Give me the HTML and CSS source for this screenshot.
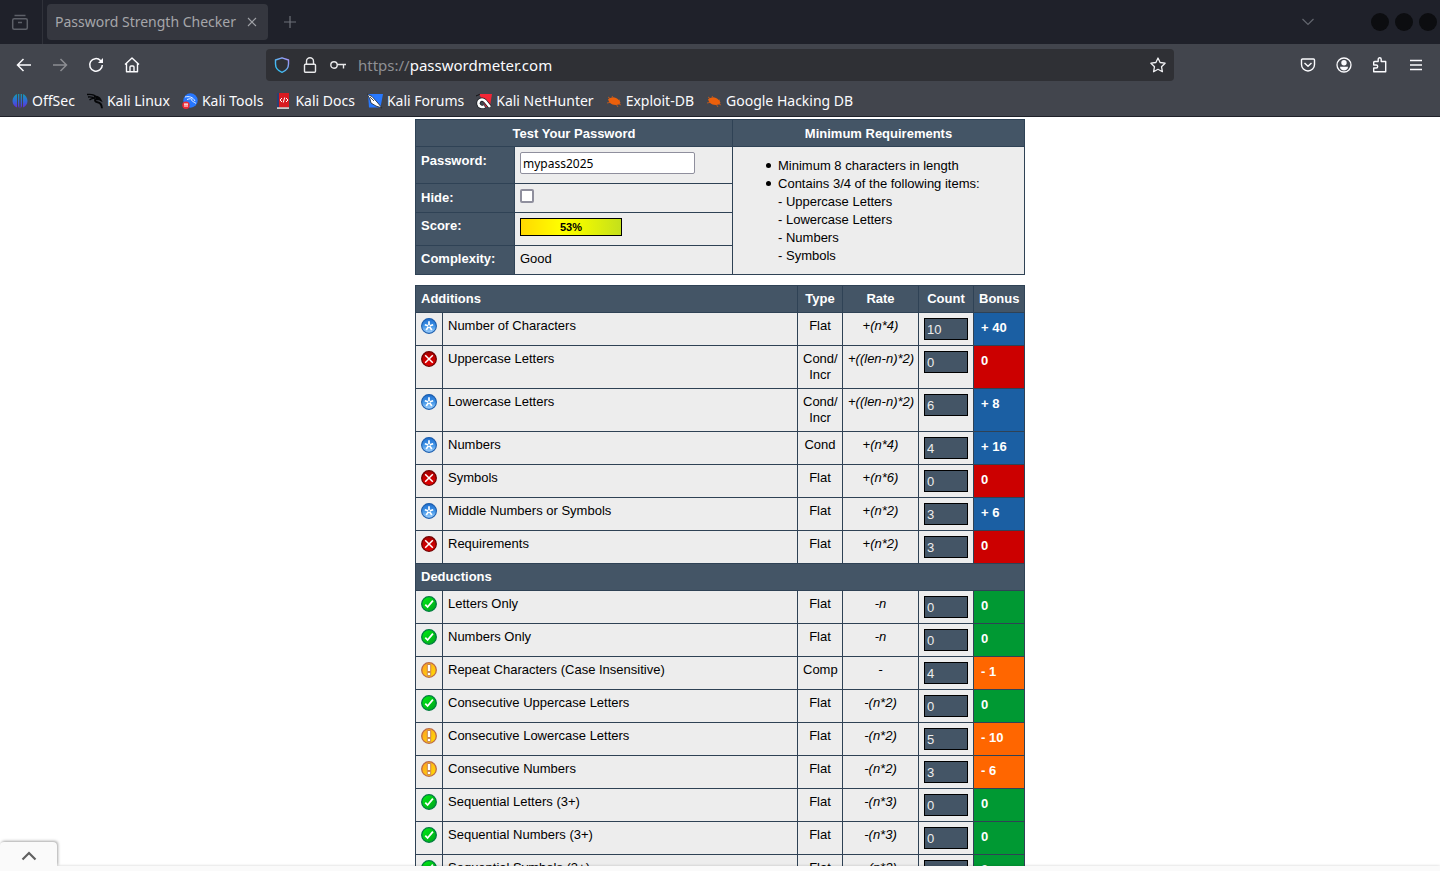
FILE: index.html
```html
<!DOCTYPE html>
<html lang="en">
<head>
<meta charset="utf-8">
<title>Password Strength Checker</title>
<meta name="viewport" content="width=device-width, initial-scale=1">
<link rel="stylesheet" href="styles.css">
</head>
<body>
<svg class="defs" aria-hidden="true">
  <defs>
    <linearGradient id="g-blue" x1="0" y1="0" x2="0" y2="1"><stop offset="0" stop-color="#1f6fd0"/><stop offset=".5" stop-color="#3f93e6"/><stop offset="1" stop-color="#a8d6ff"/></linearGradient>
    <linearGradient id="g-red" x1="0" y1="0" x2="0" y2="1"><stop offset="0" stop-color="#a80000"/><stop offset="1" stop-color="#e60000"/></linearGradient>
    <linearGradient id="g-green" x1="0" y1="0" x2="1" y2="1"><stop offset="0" stop-color="#00f010"/><stop offset="1" stop-color="#00a020"/></linearGradient>
    <linearGradient id="g-gold" x1="0" y1="0" x2="1" y2="1"><stop offset="0" stop-color="#ffa022"/><stop offset="1" stop-color="#ffe000"/></linearGradient>
    <linearGradient id="g-shield" x1="0" y1="1" x2="1" y2="0"><stop offset="0" stop-color="#20c8f8"/><stop offset=".5" stop-color="#60b0f0"/><stop offset="1" stop-color="#b090f8"/></linearGradient>
    <linearGradient id="g-off" gradientUnits="userSpaceOnUse" x1="0" y1="0" x2="0" y2="16"><stop offset="0" stop-color="#12a0a8"/><stop offset=".5" stop-color="#3068d8"/><stop offset="1" stop-color="#7020d8"/></linearGradient>
  </defs>
  <symbol id="i-star" viewBox="0 0 16 16"><circle cx="8" cy="8" r="7.4" fill="url(#g-blue)" stroke="#1c5eae" stroke-width="1.1"/><path d="M8 3.300V7.500M3.800 6.700 8 8l4.200-1.300M5.200 12 8 8l2.800 4" fill="none" stroke="#fff" stroke-width="1.700"/><circle cx="8" cy="8" r=".9" fill="#3f8fe0"/></symbol>
  <symbol id="i-cross" viewBox="0 0 16 16"><circle cx="8" cy="8" r="7.3" fill="url(#g-red)" stroke="#700000" stroke-width="1.3"/><path d="m4.200 4.200 7.600 7.600m0-7.600-7.600 7.600" stroke="#fff" stroke-width="1.5"/></symbol>
  <symbol id="i-check" viewBox="0 0 16 16"><circle cx="8" cy="8" r="7.3" fill="url(#g-green)" stroke="#007c40" stroke-width="1.3"/><path d="m4.3 8.6 2.3 2.4 5.3-6.4" fill="none" stroke="#fff" stroke-width="1.8"/></symbol>
  <symbol id="i-warn" viewBox="0 0 16 16"><circle cx="8" cy="8" r="7.3" fill="url(#g-gold)" stroke="#bd6b47" stroke-width="1.3"/><path d="M6.300 2.500h3.400v7H6.300zM6.300 10.400h3.400v3.200H6.300z" fill="#fff" stroke="#c47b4a" stroke-width=".9"/></symbol>
  <symbol id="i-bug" viewBox="0 0 16 16"><path d="M2 6.500c2-2 5-2.500 8-1.500 2.500 1 4 3 4.500 5-1.500 2-5 2.500-8 1.500-2-.8-3.500-2.500-4.500-5z" fill="#ec600b"/><path d="m2 4 4 3M1 10l5-1M6 3l2 3m6 1-3 1m4 4-4-2m1 4-2-3" stroke="#ec600b" stroke-width=".7"/></symbol>
</svg>

<header class="chrome">
  <div class="tabstrip">
    <button class="tab-view" type="button" aria-label="View recent browsing"><svg viewBox="0 0 20 20" width="20" height="20" fill="none" stroke="#5d6068" stroke-width="1.5"><path d="M4.500 3.500h11"/><rect x="2.700" y="6.700" width="14.600" height="10.600" rx="1.500"/><path d="M8 10.500h4"/></svg></button>
    <div class="tab"><span>Password Strength Checker</span><button type="button" aria-label="Close tab"><svg viewBox="0 0 10 10" width="10" height="10" stroke="#9fa1a6" stroke-width="1.100"><path d="m1 1 8 8m0-8-8 8"/></svg></button></div>
    <button class="new-tab" type="button" aria-label="New tab"><svg viewBox="0 0 12 12" width="12" height="12" stroke="#6d7078" stroke-width="1.200"><path d="M6 0v12M0 6h12"/></svg></button>
    <button class="all-tabs" type="button" aria-label="List all tabs"><svg viewBox="0 0 12 8" width="12" height="8" fill="none" stroke="#63666e" stroke-width="1.200"><path d="m.5 1 5.500 5.500L11.500 1"/></svg></button>
    <div class="window-buttons"><button type="button" aria-label="Minimize"></button><button type="button" aria-label="Maximize"></button><button type="button" aria-label="Close window"></button></div>
  </div>

  <div class="toolbar">
    <div class="nav-left">
      <button type="button" aria-label="Back"><svg viewBox="0 0 16 16" width="16" height="16" fill="none" stroke="#fbfbfe" stroke-width="1.500"><path d="M15 8H1.500M7.500 2l-6 6 6 6"/></svg></button>
      <button type="button" aria-label="Forward" disabled><svg viewBox="0 0 16 16" width="16" height="16" fill="none" stroke="#8c8d92" stroke-width="1.500"><path d="M1 8h13.500M8.500 2l6 6-6 6"/></svg></button>
      <button type="button" aria-label="Reload"><svg viewBox="0 0 16 16" width="16" height="16" fill="none" stroke="#fbfbfe" stroke-width="1.500"><path d="M14.300 8A6.300 6.300 0 1 1 12.500 3.500l1.500 1.500"/><path d="M15 1v5h-5z" fill="#fbfbfe" stroke="none"/></svg></button>
      <button type="button" aria-label="Home"><svg viewBox="0 0 16 16" width="16" height="16" fill="none" stroke="#fbfbfe" stroke-width="1.400" stroke-linejoin="round"><path d="M1 7.500 8 1l7 6.500M2.500 6.500v8.300h11V6.500M6 14.500V10a1 1 0 0 1 1-1h2a1 1 0 0 1 1 1v4.500"/></svg></button>
    </div>
    <div class="urlbar">
      <svg viewBox="0 0 16 16" width="16" height="16" fill="none" stroke="url(#g-shield)" stroke-width="1.400" stroke-linejoin="round"><path d="M8 .8 14.500 3v4c0 4-3 7-6.500 8.300C4.500 14 1.500 11 1.500 7V3z"/></svg>
      <svg viewBox="0 0 16 16" width="16" height="16" fill="none" stroke="#e8e8ea" stroke-width="1.400"><rect x="2.500" y="7.300" width="11" height="8" rx="1"/><path d="M4.500 7V4.200a3.500 3.500 0 0 1 7 0V7"/></svg>
      <svg viewBox="0 0 16 16" width="16" height="16" fill="none" stroke="#e8e8ea" stroke-width="1.400"><circle cx="4" cy="8" r="3.200"/><path d="M7 7.500h9M13.500 8v3.500"/></svg>
      <a class="url" href="https://passwordmeter.com"><span>https://</span>passwordmeter.com</a>
      <button type="button" aria-label="Bookmark this page"><svg viewBox="0 0 16 16" width="16" height="16" fill="none" stroke="#f0f0f3" stroke-width="1.300" stroke-linejoin="round"><path d="m8 1 2.100 4.500 5 .7-3.600 3.500.9 5L8 12.300l-4.400 2.400.9-5L.9 6.200l5-.7z"/></svg></button>
    </div>
    <div class="nav-right">
      <button type="button" aria-label="Pocket"><svg viewBox="0 0 16 16" width="16" height="16" fill="none" stroke="#fbfbfe" stroke-width="1.400" stroke-linejoin="round"><path d="M2.500 2h11a1 1 0 0 1 1 1v4.500a6.500 6.500 0 0 1-13 0V3a1 1 0 0 1 1-1zM4.500 6 8 9.300 11.500 6"/></svg></button>
      <button type="button" aria-label="Account"><svg viewBox="0 0 16 16" width="16" height="16" fill="#fbfbfe"><circle cx="8" cy="8" r="7" fill="none" stroke="#fbfbfe" stroke-width="1.300"/><circle cx="8" cy="5.800" r="2.700"/><path d="M4 9.800h8c0 5-8 5-8 0z"/></svg></button>
      <button type="button" aria-label="Extensions"><svg viewBox="0 0 16 16" width="16" height="16" fill="none" stroke="#fbfbfe" stroke-width="1.400" stroke-linejoin="round"><path d="M1.700 8V5.500a1 1 0 0 1 1-1h3.500V2.300a1.500 1.500 0 0 1 3 0v2.200h4.500v10.300h-12V11h2.500a1.500 1.500 0 0 0 0-3z"/></svg></button>
      <button type="button" aria-label="Application menu"><svg viewBox="0 0 16 16" width="16" height="16" stroke="#fbfbfe" stroke-width="1.400"><path d="M2 3.500h12M2 8h12M2 12.500h12"/></svg></button>
    </div>
  </div>

  <nav class="bookmarks" aria-label="Bookmarks">
    <a href="#"><svg viewBox="0 0 16 16" width="16" height="16" fill="url(#g-off)"><path d="M5 1v13.500C2.500 13.500.5 11 .5 8s2-6 4.500-7zM6 1h1.300v14.500L6 13zM8.700 1H10v12l-1.300 2.500zM11 1c2.500 1 4.500 4 4.500 7s-2 5.500-4.500 6.500z"/></svg>OffSec</a>
    <a href="#"><svg viewBox="0 0 16 16" width="16" height="16" fill="none" stroke="#050608"><path d="M0 1.500c4-.5 8 .5 10 3M1 4c3-.5 5 0 7 1.500M2.500 7C4 5.500 6 5 8 5.500" stroke-width="1.300"/><path d="M7 4c2-.5 5 0 6.500 3L12 6.200 9.500 6C7 7 8 9 10.500 9.300c3 .4 4.200 2 4.500 6" stroke-width="1.900"/></svg>Kali Linux</a>
    <a href="#"><svg viewBox="0 0 16 16" width="16" height="16"><circle cx="8.500" cy="7.500" r="7.200" fill="#2777ff"/><path d="M3 4c4-1 8 0 10 4M5 6.500c3-1 4-1 5 0-1 2 2 2 4 4" stroke="#fff" stroke-width=".9" fill="none"/><circle cx="4" cy="12.200" r="3.700" fill="#ed2835"/><path d="M2 11h4M3 11v3m2-3v3" stroke="#fff"/></svg>Kali Tools</a>
    <a href="#"><svg viewBox="0 0 16 16" width="16" height="16"><path d="M2 0h12v16H2z" fill="#d91a20"/><path d="M2 0h2v15H2z" fill="#273f75"/><path d="M2 14.200h12V16H2z" fill="#c9c9c9"/><path d="M7 5 5 7l2 2m4-4 2 2-2 2M9.700 4.500 8.300 9.500" stroke="#fff" fill="none"/></svg>Kali Docs</a>
    <a href="#"><svg viewBox="0 0 16 16" width="16" height="16"><path d="M1 1h15l-2.500 13.500H2z" fill="#2879ff"/><path d="m0 1 5 2.500 5 5.500 5 6-6-2-5-3-1-4z" fill="#fff" stroke="#20252c" stroke-width=".8"/><path d="m3 4 4 4" stroke="#20252c" stroke-width=".8"/></svg>Kali Forums</a>
    <a href="#"><svg viewBox="0 0 16 16" width="16" height="16"><path d="m3 1 13 0-2 12-4 1z" fill="#f32636"/><path d="M0 3c2-1 3-1 4-2" stroke="#111" /><path d="M14 14 9 8C6 5 2 7 2.500 11c.5 3 4 3.500 6 2.500" fill="none" stroke="#181b20" stroke-width="4"/><path d="M14 14 9 8C6 5 2 7 2.500 11c.5 3 4 3.500 6 2.500" fill="none" stroke="#fff" stroke-width="2.600"/></svg>Kali NetHunter</a>
    <a href="#"><svg width="16" height="16"><use href="#i-bug"/></svg>Exploit-DB</a>
    <a href="#"><svg width="16" height="16"><use href="#i-bug"/></svg>Google Hacking DB</a>
  </nav>
</header>

<main class="page">
  <div class="meter">
    <table class="test">
      <colgroup><col class="w-label"><col class="w-field"><col></colgroup>
      <thead><tr><th colspan="2" scope="colgroup">Test Your Password</th><th scope="col">Minimum Requirements</th></tr></thead>
      <tbody>
        <tr class="row-password"><th scope="row"><label for="pwd">Password:</label></th><td><input class="pwd" id="pwd" type="text" value="mypass2025"></td>
          <td class="requirements" rowspan="4"><ul><li>Minimum 8 characters in length</li><li>Contains 3/4 of the following items:<br>- Uppercase Letters<br>- Lowercase Letters<br>- Numbers<br>- Symbols</li></ul></td></tr>
        <tr class="row-hide"><th scope="row"><label for="hide">Hide:</label></th><td><input class="hide" id="hide" type="checkbox"></td></tr>
        <tr class="row-score"><th scope="row">Score:</th><td><div class="score">53%</div></td></tr>
        <tr class="row-complexity"><th scope="row">Complexity:</th><td>Good</td></tr>
      </tbody>
    </table>

    <table class="rules">
      <colgroup><col class="w-icon"><col><col class="w-type"><col class="w-rate"><col class="w-count"><col class="w-bonus"></colgroup>
      <thead><tr><th class="left" colspan="2" scope="colgroup">Additions</th><th scope="col">Type</th><th scope="col">Rate</th><th scope="col">Count</th><th scope="col">Bonus</th></tr></thead>
      <tbody>
        <tr><td><svg class="mark"><use href="#i-star"/></svg></td><td>Number of Characters</td><td>Flat</td><td>+(n*4)</td><td><input type="text" aria-label="Number of Characters count" value="10" readonly></td><td class="exceed"><div>+ 40</div></td></tr>
        <tr><td><svg class="mark"><use href="#i-cross"/></svg></td><td>Uppercase Letters</td><td>Cond/<br>Incr</td><td>+((len-n)*2)</td><td><input type="text" aria-label="Uppercase Letters count" value="0" readonly></td><td class="fail"><div>0</div></td></tr>
        <tr><td><svg class="mark"><use href="#i-star"/></svg></td><td>Lowercase Letters</td><td>Cond/<br>Incr</td><td>+((len-n)*2)</td><td><input type="text" aria-label="Lowercase Letters count" value="6" readonly></td><td class="exceed"><div>+ 8</div></td></tr>
        <tr><td><svg class="mark"><use href="#i-star"/></svg></td><td>Numbers</td><td>Cond</td><td>+(n*4)</td><td><input type="text" aria-label="Numbers count" value="4" readonly></td><td class="exceed"><div>+ 16</div></td></tr>
        <tr><td><svg class="mark"><use href="#i-cross"/></svg></td><td>Symbols</td><td>Flat</td><td>+(n*6)</td><td><input type="text" aria-label="Symbols count" value="0" readonly></td><td class="fail"><div>0</div></td></tr>
        <tr><td><svg class="mark"><use href="#i-star"/></svg></td><td>Middle Numbers or Symbols</td><td>Flat</td><td>+(n*2)</td><td><input type="text" aria-label="Middle Numbers or Symbols count" value="3" readonly></td><td class="exceed"><div>+ 6</div></td></tr>
        <tr><td><svg class="mark"><use href="#i-cross"/></svg></td><td>Requirements</td><td>Flat</td><td>+(n*2)</td><td><input type="text" aria-label="Requirements count" value="3" readonly></td><td class="fail"><div>0</div></td></tr>
      </tbody>
      <tbody>
        <tr><th class="left" colspan="6" scope="rowgroup">Deductions</th></tr>
        <tr><td><svg class="mark"><use href="#i-check"/></svg></td><td>Letters Only</td><td>Flat</td><td>-n</td><td><input type="text" aria-label="Letters Only count" value="0" readonly></td><td class="pass"><div>0</div></td></tr>
        <tr><td><svg class="mark"><use href="#i-check"/></svg></td><td>Numbers Only</td><td>Flat</td><td>-n</td><td><input type="text" aria-label="Numbers Only count" value="0" readonly></td><td class="pass"><div>0</div></td></tr>
        <tr><td><svg class="mark"><use href="#i-warn"/></svg></td><td>Repeat Characters (Case Insensitive)</td><td>Comp</td><td>-</td><td><input type="text" aria-label="Repeat Characters count" value="4" readonly></td><td class="warn"><div>- 1</div></td></tr>
        <tr><td><svg class="mark"><use href="#i-check"/></svg></td><td>Consecutive Uppercase Letters</td><td>Flat</td><td>-(n*2)</td><td><input type="text" aria-label="Consecutive Uppercase Letters count" value="0" readonly></td><td class="pass"><div>0</div></td></tr>
        <tr><td><svg class="mark"><use href="#i-warn"/></svg></td><td>Consecutive Lowercase Letters</td><td>Flat</td><td>-(n*2)</td><td><input type="text" aria-label="Consecutive Lowercase Letters count" value="5" readonly></td><td class="warn"><div>- 10</div></td></tr>
        <tr><td><svg class="mark"><use href="#i-warn"/></svg></td><td>Consecutive Numbers</td><td>Flat</td><td>-(n*2)</td><td><input type="text" aria-label="Consecutive Numbers count" value="3" readonly></td><td class="warn"><div>- 6</div></td></tr>
        <tr><td><svg class="mark"><use href="#i-check"/></svg></td><td>Sequential Letters (3+)</td><td>Flat</td><td>-(n*3)</td><td><input type="text" aria-label="Sequential Letters count" value="0" readonly></td><td class="pass"><div>0</div></td></tr>
        <tr><td><svg class="mark"><use href="#i-check"/></svg></td><td>Sequential Numbers (3+)</td><td>Flat</td><td>-(n*3)</td><td><input type="text" aria-label="Sequential Numbers count" value="0" readonly></td><td class="pass"><div>0</div></td></tr>
        <tr><td><svg class="mark"><use href="#i-check"/></svg></td><td>Sequential Symbols (3+)</td><td>Flat</td><td>-(n*3)</td><td><input type="text" aria-label="Sequential Symbols count" value="0" readonly></td><td class="pass"><div>0</div></td></tr>
      </tbody>
    </table>
  </div>
</main>

<footer class="drawer">
  <button class="drawer-tab" type="button" aria-label="Expand panel"><svg viewBox="0 0 16 10" width="16" height="10" fill="none" stroke="#616161" stroke-width="2.200"><path d="m1.500 8.500 6.500-6.500 6.500 6.500"/></svg></button>
</footer>
</body>
</html>
```

FILE: styles.css
```css
* { box-sizing: border-box; }

body {
  margin: 0;
  height: 100vh;
  display: flex;
  flex-direction: column;
  overflow: hidden;
  background: #fff;
  color: #000;
  font: 13px/16px "Liberation Sans", Arial, sans-serif;
}

.defs { position: absolute; width: 0; height: 0; }

button {
  display: flex;
  align-items: center;
  justify-content: center;
  padding: 0;
  border: 0;
  background: none;
  color: inherit;
  font: inherit;
}

svg { display: block; flex: none; }

/* Browser chrome */
.chrome {
  flex: none;
  background: #42454d;
  border-bottom: 1px solid #1f2129;
  color: #fbfbfe;
  font: 14px/20px "Noto Sans", sans-serif;
}

.tabstrip {
  display: flex;
  align-items: center;
  height: 44px;
  background: #1f212a;
}

.tab-view {
  width: 43px;
  height: 44px;
  padding-right: 3px;
  border-right: 1px solid #30323a;
}

.tab {
  display: flex;
  align-items: center;
  justify-content: space-between;
  width: 221px;
  height: 36px;
  margin-left: 4px;
  padding: 0 11px 0 8px;
  border-radius: 4px;
  background: #35373f;
  color: #a5a6aa;
  white-space: nowrap;
}

.new-tab { width: 44px; height: 44px; }

.all-tabs { width: 44px; height: 44px; margin-left: auto; }

.window-buttons { display: flex; gap: 6px; margin: 0 3px 0 41px; }

.window-buttons button {
  width: 18px;
  height: 18px;
  border-radius: 50%;
  background: #0c0d10;
}

.toolbar { display: flex; align-items: center; height: 42px; }

.nav-left, .nav-right { display: flex; gap: 4px; }

.nav-left { width: 266px; padding-left: 8px; }

.nav-right { width: 266px; padding-right: 8px; justify-content: flex-end; }

.nav-left button, .nav-right button { width: 32px; height: 32px; }

.urlbar {
  display: flex;
  align-items: center;
  gap: 12px;
  flex: 1;
  height: 32px;
  padding: 0 8px;
  border-radius: 4px;
  background: #2f3035;
}

.url {
  flex: 1;
  color: #fbfbfe;
  font-size: 15px;
  text-decoration: none;
}

.url span { color: #8e8f93; }

.bookmarks {
  display: flex;
  align-items: center;
  gap: 12px;
  height: 30px;
  padding: 0 12px;
}

.bookmarks a {
  display: flex;
  align-items: center;
  gap: 4px;
  color: inherit;
  text-decoration: none;
  white-space: nowrap;
}

/* Page */
.page { flex: 1; min-height: 0; overflow: hidden; }

.meter {
  display: flex;
  flex-direction: column;
  gap: 10px;
  max-width: 610px;
  margin: 0 auto;
  padding-top: 2px;
}

table {
  width: 100%;
  border-collapse: collapse;
  table-layout: fixed;
  background: #ededed;
}

th, td {
  padding: 5px;
  border: 1px solid #2f4255;
  text-align: left;
  vertical-align: top;
}

th { background: #445566; color: #fff; }

thead th { text-align: center; }

thead .left { text-align: left; }

.test thead th, .row-password th, .row-hide th { padding: 6px 5px 4px; }

.w-label { width: 99px; }
.w-field { width: 218px; }

.row-password { height: 37px; }
.row-hide { height: 29px; }
.row-score { height: 33px; }
.row-complexity { height: 29px; }

.pwd {
  display: block;
  width: 175px;
  height: 22px;
  padding: 0 2px;
  border: 1px solid #8f8f9d;
  border-radius: 2px;
  background: #fff;
  color: #000;
  font: 12px/20px "Noto Sans", sans-serif;
}

.hide {
  appearance: none;
  display: block;
  width: 14px;
  height: 14px;
  margin: 0;
  border: 2px solid #8f8f9d;
  border-radius: 2px;
  background: #fff;
}

.score {
  width: 102px;
  height: 18px;
  border: 1px solid #000;
  background: linear-gradient(90deg, #ffd800, #ffff00 40%, #f0f800 60%, #c4e01c);
  font-size: 11px;
  font-weight: bold;
  text-align: center;
}

.requirements { line-height: 18px; }

.requirements ul { margin: 5px 0 0; padding-left: 40px; list-style: none; }

.requirements li::before {
  content: "";
  display: inline-block;
  width: 5px;
  height: 5px;
  margin: 0 7px 2px -12px;
  border-radius: 50%;
  background: #000;
}

.w-icon { width: 27px; }
.w-type { width: 45px; }
.w-rate { width: 76px; }
.w-count { width: 55px; }
.w-bonus { width: 51px; }

.mark { width: 16px; height: 16px; }

.rules td:nth-child(3), .rules td:nth-child(4) { text-align: center; }

.rules td:nth-child(4) { font-style: italic; white-space: nowrap; }

.rules input {
  display: block;
  width: 44px;
  height: 22px;
  padding: 0 2px;
  border: 1px solid #000;
  background: #445566;
  color: #ededed;
  font: inherit;
}

.rules td:last-child { color: #fff; font-weight: bold; }

.rules td div { padding: 2px; }

.rules .exceed { background: #1b5fa3; }
.rules .fail { background: #cc0000; }
.rules .pass { background: #009933; }
.rules .warn { background: #ff6600; }

/* Collapsed bottom drawer */
.drawer {
  position: relative;
  flex: none;
  height: 5px;
  background: #fafafa;
  box-shadow: 0 0 3px rgba(0, 0, 0, .2);
}

.drawer-tab {
  position: absolute;
  left: 0;
  bottom: 5px;
  width: 57px;
  height: 24px;
  padding-top: 4px;
  border-radius: 4px 4px 0 0;
  background: #fafafa;
  box-shadow: 1px -1px 3px rgba(0, 0, 0, .35);
  clip-path: inset(-4px -4px 0 0);
}
```
